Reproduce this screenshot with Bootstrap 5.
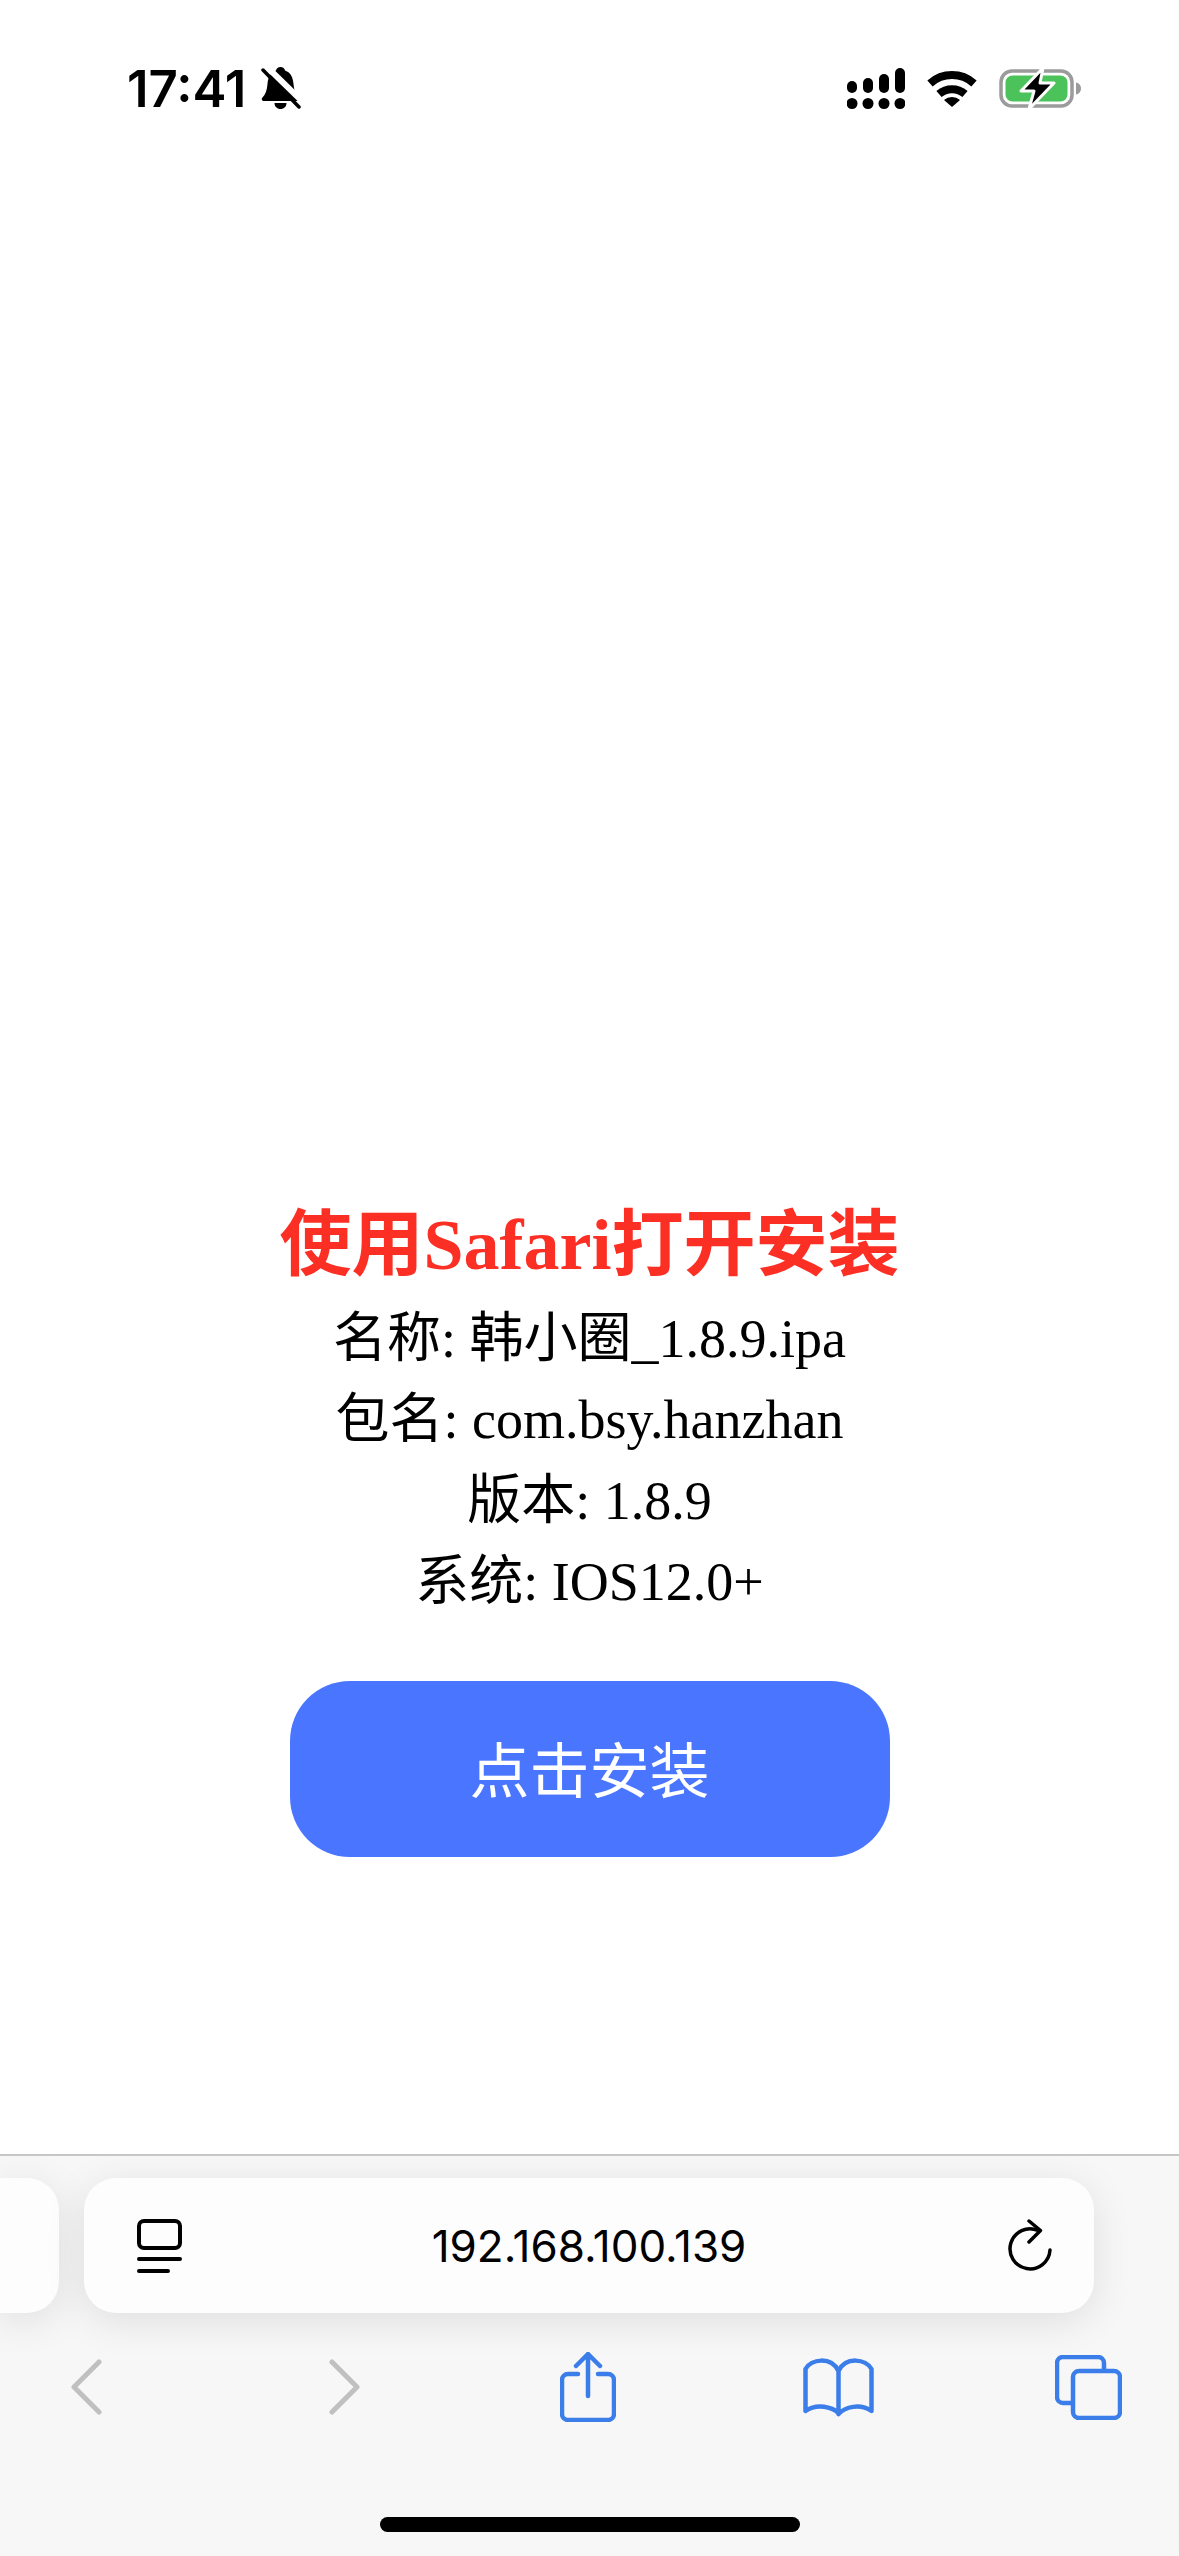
<!DOCTYPE html>
<html lang="zh-CN">
<head>
  <meta charset="UTF-8">
  <meta name="viewport" content="width=device-width,initial-scale=1">
  <title>使用Safari打开安装</title>
  <link rel="stylesheet" href="https://cdn.jsdelivr.net/npm/bootstrap@5.3.2/dist/css/bootstrap.min.css">
  <style>
    body { background:#fff; height:2556px; overflow:hidden; font-family:"Liberation Serif","Noto Sans CJK SC",serif; color:#000; }
    .page { height:2556px; }
    .status-row { height:176px; padding:0 98px 0 127px; font-family:Inter,sans-serif; }
    .clock { font-size:51px; font-weight:600; line-height:1; margin-right:15px; }
    .status-right { gap:22px; }
    .info-area { padding-top:1015px; }
    .info-title { font-size:72px; line-height:108px; font-weight:700; color:#fb2f24; margin:0; font-family:inherit; }
    .info-line { font-size:54px; line-height:81px; margin:0; }
    .install-btn { width:600px; height:176px; line-height:172px; padding:0; margin-top:58px; border:0; border-radius:60px; background:#4a76ff; color:#fff; font-size:60px; font-family:"Noto Sans CJK SC",sans-serif; font-weight:400; }
    .install-btn:hover { background:#4a76ff; color:#fff; }
    .browser-bar { height:402px; background:#f7f7f7; border-top:2px solid #c6c6c6; overflow:hidden; }
    .address-row { padding-top:22px; gap:25px; }
    .side-tab { width:59px; height:135px; background:#fdfdfd; border-radius:0 32px 32px 0; box-shadow:0 8px 40px rgba(0,0,0,.1); }
    .address-box { width:1010px; height:135px; background:#fdfdfd; border-radius:32px; padding:0 41px; box-shadow:0 8px 40px rgba(0,0,0,.1); display:grid; grid-template-columns:1fr auto 1fr; align-items:center; }
    .reader-icon { margin-left:12px; justify-self:start; }
    .reload-icon { justify-self:end; }
    .address-text { font-family:Inter,sans-serif; font-size:44px; line-height:1; }
    .tool-row { height:80px; margin-top:34px; padding-left:71px; }
    .tool-row svg { flex:none; }
    .gap-fwd { margin-left:227px; }
    .gap-share { margin-left:200px; }
    .gap-book { margin-left:187px; }
    .gap-tabs { margin-left:181px; }
    .home-bar { width:420px; height:15px; margin:90px auto 0; background:#000; border-radius:8px; }
  </style>
</head>
<body>
  <div class="page d-flex flex-column">
    <!-- status bar -->
    <div class="status-row d-flex align-items-center flex-shrink-0">
      <span class="clock">17:41</span>
      <svg width="40" height="43" viewBox="0 0 40 43">
        <path d="M19.500 0c2.500 0 4 1.500 4.500 3.500C30 5.500 32 11 32.500 17c.5 6 2 10.500 5 13.500 1.500 1.500.5 3.500-1.500 3.500H3c-2 0-3-2-1.500-3.500C4.500 27.500 6 23 6.500 17 7 11 9 5.500 15 3.500 15.500 1.500 17 0 19.500 0z"/>
        <path d="M13.500 36h12c0 3.500-2.500 6-6 6s-6-2.500-6-6z"/>
        <path d="M5 -1L43 36" stroke="#fff" stroke-width="6"/>
        <path d="M2 3L38 40" stroke="#000" stroke-width="3.500" stroke-linecap="round"/>
      </svg>
      <div class="status-right d-flex align-items-center ms-auto">
        <svg width="58" height="41" viewBox="0 0 58 41">
          <rect x="0" y="13" width="10" height="12" rx="5"/><rect x="16" y="10" width="10" height="15" rx="5"/><rect x="32" y="6" width="10" height="19" rx="5"/><rect x="48" y="0" width="10" height="25" rx="5"/>
          <circle cx="5" cy="35.500" r="5.500"/><circle cx="21" cy="35.500" r="5.500"/><circle cx="37" cy="35.500" r="5.500"/><circle cx="53" cy="35.500" r="5.500"/>
        </svg>
        <svg width="50" height="37" viewBox="0 0 50 37">
          <path d="M3 13.500A33 33 0 0 1 47 13.500" fill="none" stroke="#000" stroke-width="8"/>
          <path d="M12 24A20 20 0 0 1 38 24" fill="none" stroke="#000" stroke-width="8"/>
          <path d="M17 30A12 12 0 0 1 33 30L25 37z"/>
        </svg>
        <svg width="82" height="41" viewBox="0 0 82 41">
          <rect x="2" y="3" width="71" height="35" rx="11" fill="none" stroke="#9b9b9b" stroke-width="3.500"/>
          <rect x="6.500" y="7.500" width="62" height="26" rx="7" fill="#4cc35a"/>
          <path d="M77 14.500c3 .5 5 3 5 6s-2 5.500-5 6z" fill="#9b9b9b"/>
          <path d="M44 0L22 23H35L30 41L55 15H41z" stroke="#fff" stroke-width="3" stroke-linejoin="round"/>
        </svg>
      </div>
    </div>

    <!-- content -->
    <div class="info-area flex-grow-1 text-center">
      <h1 class="info-title">使用Safari打开安装</h1>
      <p class="info-line">名称: 韩小圈_1.8.9.ipa</p>
      <p class="info-line">包名: com.bsy.hanzhan</p>
      <p class="info-line">版本: 1.8.9</p>
      <p class="info-line">系统: IOS12.0+</p>
      <a href="#" class="btn install-btn d-block mx-auto">点击安装</a>
    </div>

    <!-- safari toolbar -->
    <div class="browser-bar flex-shrink-0">
      <div class="address-row d-flex">
        <div class="side-tab"></div>
        <div class="address-box">
          <svg class="reader-icon" width="45" height="54" viewBox="0 0 45 54" fill="none" stroke="#000" stroke-width="4" stroke-linecap="round">
            <rect x="2" y="2" width="41" height="27" rx="5"/>
            <path d="M2 40H43M2 52H31"/>
          </svg>
          <span class="address-text">192.168.100.139</span>
          <svg class="reload-icon" width="46" height="54" viewBox="0 0 46 54" fill="none" stroke="#000" stroke-width="3.500" stroke-linecap="round" stroke-linejoin="round">
            <path d="M31 11.500A20 20 0 1 0 43 31"/>
            <path d="M22 2L33.500 11.500L22 23"/>
          </svg>
        </div>
      </div>
      <div class="tool-row d-flex align-items-center">
        <svg width="31" height="56" viewBox="0 0 31 56" fill="none" stroke="#c0c0c0" stroke-width="5" stroke-linecap="round" stroke-linejoin="round"><path d="M28 3L3 28L28 53"/></svg>
        <svg class="gap-fwd" width="31" height="56" viewBox="0 0 31 56" fill="none" stroke="#c0c0c0" stroke-width="5" stroke-linecap="round" stroke-linejoin="round"><path d="M3 3L28 28L3 53"/></svg>
        <svg class="gap-share" width="56" height="70" viewBox="0 0 56 70" fill="none" stroke="#3b7de9" stroke-width="4.500" stroke-linecap="round" stroke-linejoin="round">
          <path d="M18 22H8a6 6 0 0 0-6 6V62a6 6 0 0 0 6 6H48a6 6 0 0 0 6-6V28a6 6 0 0 0-6-6H38"/>
          <path d="M28 44V2M16 14L28 2L40 14"/>
        </svg>
        <svg class="gap-book" width="71" height="60" viewBox="0 0 71 60" fill="none" stroke="#3b7de9" stroke-width="4.500" stroke-linecap="round" stroke-linejoin="round">
          <path d="M35.500 14V56C29 50 14 46 2.500 54V12C8 2 28 -1 35.500 14C43 -1 63 2 68.500 12V54C57 46 42 50 35.500 57"/>
        </svg>
        <svg class="gap-tabs" width="67" height="65" viewBox="0 0 67 65" fill="none" stroke="#3b7de9" stroke-width="4.500" stroke-linejoin="round">
          <path d="M49 14V8a6 6 0 0 0-6-6H8A6 6 0 0 0 2 8V42a6 6 0 0 0 6 6h10"/>
          <rect x="18" y="16" width="47" height="47" rx="6"/>
        </svg>
      </div>
      <div class="home-bar"></div>
    </div>
  </div>
  <script src="https://cdn.jsdelivr.net/npm/bootstrap@5.3.2/dist/js/bootstrap.bundle.min.js"></script>
</body>
</html>
